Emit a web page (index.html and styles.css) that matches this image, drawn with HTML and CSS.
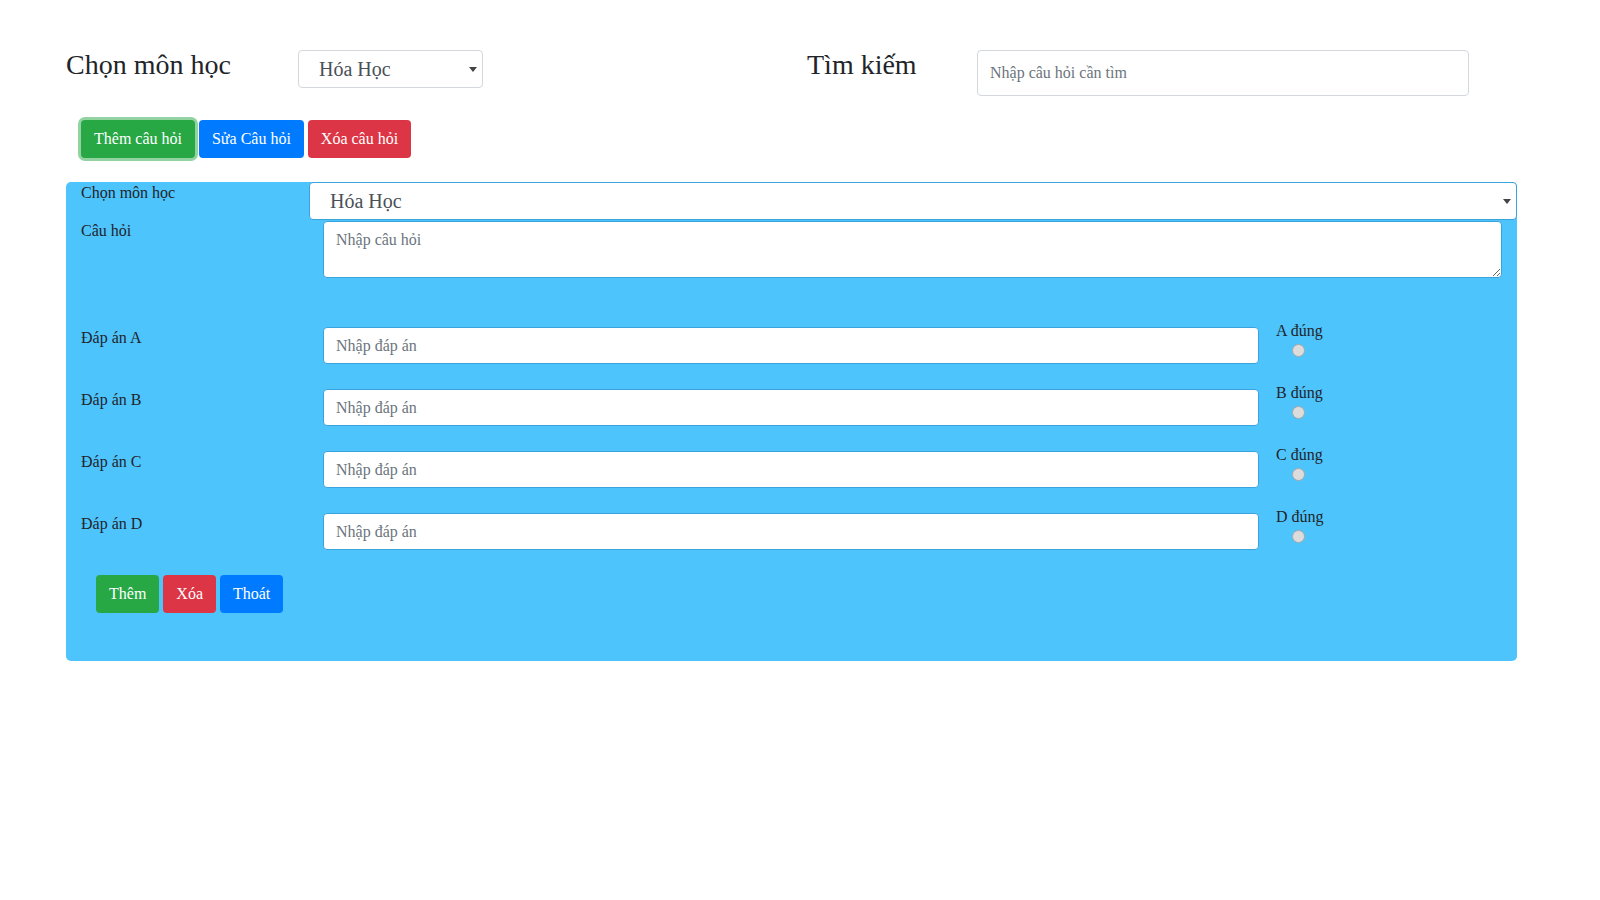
FILE: index.html
```html
<!DOCTYPE html>
<html lang="vi">
<head>
  <meta charset="UTF-8" />
  <meta name="viewport" content="width=device-width, initial-scale=1.0"/>
  <title>Quản lý câu hỏi</title>
  <link rel="stylesheet" href="styles.css">
</head>
<body>

  <div class="page">
    <div class="top-row">
      <h3 class="top-title">Chọn môn học</h3>
      <div class="select-wrap subject-select">
        <select>
          <option>Hóa Học</option>
          <option>Vật Lý</option>
          <option>Sinh Học</option>
        </select>
      </div>
      <h3 class="top-title search-title">Tìm kiếm</h3>
      <input type="text" class="search-input" placeholder="Nhập câu hỏi cần tìm" />
    </div>

    <div class="action-row">
      <button type="button" class="btn btn-green btn-focus">Thêm câu hỏi</button>
      <button type="button" class="btn btn-blue">Sửa Câu hỏi</button>
      <button type="button" class="btn btn-red">Xóa câu hỏi</button>
    </div>

    <form class="question-panel">
      <div class="form-row">
        <label class="field-label">Chọn môn học</label>
        <div class="select-wrap panel-select">
          <select>
            <option>Hóa Học</option>
            <option>Vật Lý</option>
            <option>Sinh Học</option>
          </select>
        </div>
      </div>

      <div class="form-row">
        <label class="field-label">Câu hỏi</label>
        <textarea class="question-input" placeholder="Nhập câu hỏi"></textarea>
      </div>

      <div class="answer-row first-answer">
        <label class="field-label answer-label">Đáp án A</label>
        <input type="text" class="answer-input" placeholder="Nhập đáp án" />
        <div class="check-group">
          <span>A đúng</span>
          <input type="radio" name="correct" value="A" />
        </div>
      </div>

      <div class="answer-row">
        <label class="field-label answer-label">Đáp án B</label>
        <input type="text" class="answer-input" placeholder="Nhập đáp án" />
        <div class="check-group">
          <span>B đúng</span>
          <input type="radio" name="correct" value="B" />
        </div>
      </div>

      <div class="answer-row">
        <label class="field-label answer-label">Đáp án C</label>
        <input type="text" class="answer-input" placeholder="Nhập đáp án" />
        <div class="check-group">
          <span>C đúng</span>
          <input type="radio" name="correct" value="C" />
        </div>
      </div>

      <div class="answer-row">
        <label class="field-label answer-label">Đáp án D</label>
        <input type="text" class="answer-input" placeholder="Nhập đáp án" />
        <div class="check-group">
          <span>D đúng</span>
          <input type="radio" name="correct" value="D" />
        </div>
      </div>

      <div class="panel-buttons">
        <button type="button" class="btn btn-green">Thêm</button>
        <button type="button" class="btn btn-red">Xóa</button>
        <button type="button" class="btn btn-blue">Thoát</button>
      </div>
    </form>
  </div>

</body>
</html>
```

FILE: styles.css
```css
body {
  margin: 0;
  font-family: "Liberation Serif", "Times New Roman", serif;
  color: #212529;
  background: #fff;
}

.page {
  min-height: 1320px;
}

/* top bar */
.top-row {
  display: flex;
  align-items: flex-start;
  padding: 48px 0 0 66px;
}

.top-title {
  margin: 0;
  width: 232px;
  font-size: 28px;
  font-weight: normal;
  line-height: 1.2;
}

.search-title {
  width: 170px;
  margin-left: 324px;
}

.subject-select {
  width: 185px;
  height: 38px;
  margin-top: 2px;
}

.search-input {
  width: 492px;
  height: 46px;
  margin-top: 2px;
  box-sizing: border-box;
  padding: 0 12px;
  border: 1px solid #d4d8dc;
  border-radius: 4px;
  font-family: inherit;
  font-size: 16px;
  color: #495057;
}

input::placeholder,
textarea::placeholder {
  color: #6c757d;
}

/* selects */
.select-wrap {
  position: relative;
}

.select-wrap select {
  width: 100%;
  height: 100%;
  box-sizing: border-box;
  padding: 0 20px;
  -webkit-appearance: none;
  appearance: none;
  background: #fff;
  border: 1px solid #d4d8dc;
  border-radius: 4px;
  font-family: inherit;
  font-size: 20px;
  color: #495057;
}

.select-wrap::after {
  content: "";
  position: absolute;
  right: 6px;
  top: 50%;
  margin-top: -2px;
  border-left: 4px solid transparent;
  border-right: 4px solid transparent;
  border-top: 5px solid #444;
  pointer-events: none;
}

/* buttons */
.btn {
  height: 38px;
  padding: 0 12px;
  border: 1px solid transparent;
  border-radius: 4px;
  font-family: inherit;
  font-size: 16px;
  color: #fff;
  cursor: pointer;
}

.btn-green {
  background-color: #28a745;
}

.btn-blue {
  background-color: #007bff;
}

.btn-red {
  background-color: #dc3545;
}

.btn-focus {
  box-shadow: 0 0 0 3px rgba(40, 167, 69, 0.5);
}

.action-row {
  display: flex;
  gap: 4px;
  margin-top: 24px;
  padding-left: 81px;
}

/* question form */
.question-panel {
  width: 1451px;
  height: 479px;
  box-sizing: border-box;
  margin: 24px 0 0 66px;
  padding-left: 15px;
  background: #4ec4fd;
  border-radius: 5px;
}

.form-row,
.answer-row {
  display: flex;
  align-items: flex-start;
}

.field-label {
  width: 228px;
  flex-shrink: 0;
  font-size: 16px;
  line-height: 21px;
}

.panel-select {
  width: 1208px;
  height: 38px;
}

.panel-select select {
  border-color: #3ba3dc;
}

.question-input {
  width: 1179px;
  height: 57px;
  margin: 1px 0 0 14px;
  box-sizing: border-box;
  padding: 6px 12px;
  border: 1px solid #3ba3dc;
  border-radius: 4px;
  font-family: inherit;
  font-size: 16px;
  line-height: 24px;
  color: #495057;
}

.first-answer {
  margin-top: 43px;
}

.answer-row {
  margin-bottom: 19px;
}

.answer-label {
  padding-top: 6px;
}

.answer-input {
  width: 936px;
  height: 37px;
  margin: 6px 0 0 14px;
  box-sizing: border-box;
  padding: 0 12px;
  border: 1px solid #3ba3dc;
  border-radius: 4px;
  font-family: inherit;
  font-size: 16px;
  color: #495057;
}

.check-group {
  display: flex;
  flex-direction: column;
  align-items: flex-start;
  margin-left: 17px;
  font-size: 16px;
  line-height: 1.2;
}

.check-group input {
  -webkit-appearance: none;
  appearance: none;
  width: 13px;
  height: 13px;
  margin: 4px 0 0 16px;
  border: 1px solid #a8a8a8;
  border-radius: 50%;
  background: #dcdcdc;
}

/* the row margin above collapses into this one */
.panel-buttons {
  display: flex;
  gap: 4px;
  margin: 25px 0 0 15px;
}
```
